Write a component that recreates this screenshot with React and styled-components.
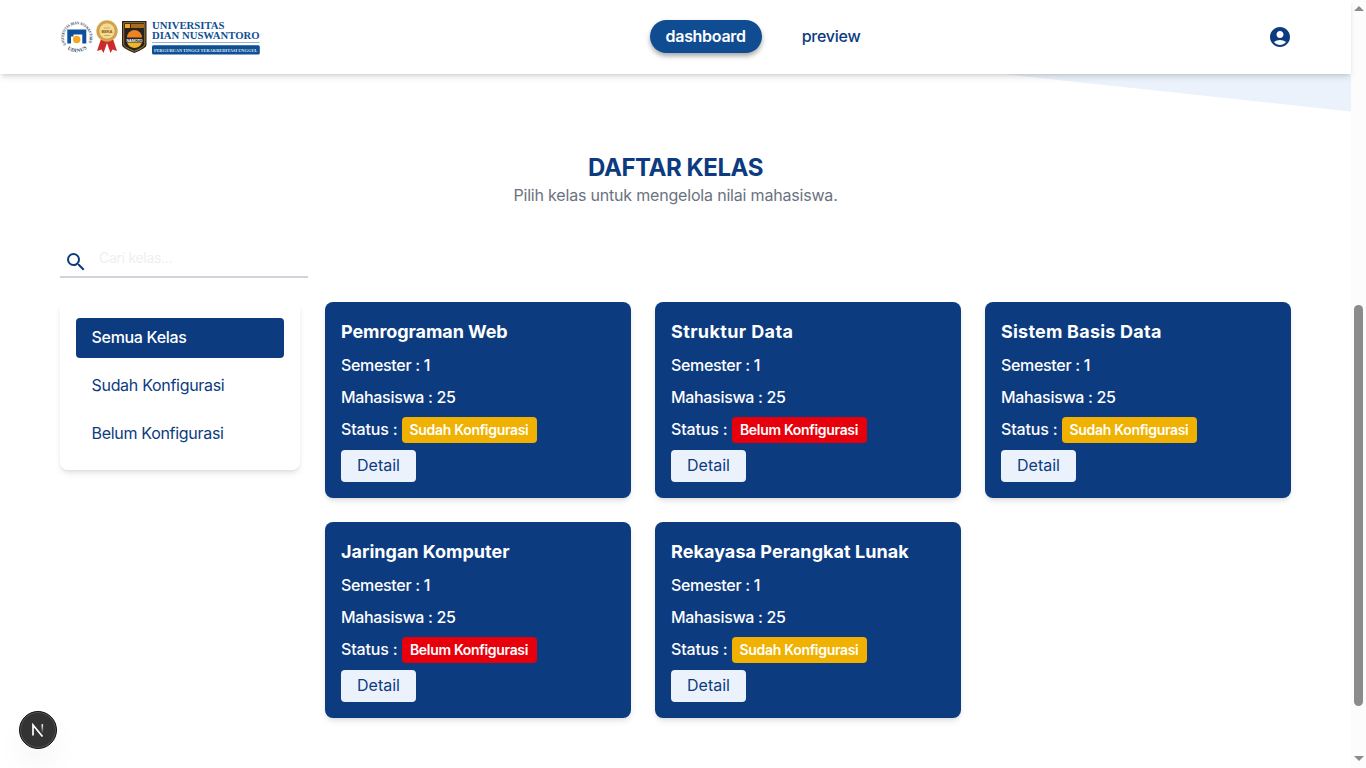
import React from "react";
import styled, { createGlobalStyle } from "styled-components";
import { MdAccountCircle, MdSearch } from "react-icons/md";

const navy = "#0c3b80";

const GlobalStyle = createGlobalStyle`
  *, *::before, *::after { box-sizing: border-box; }
  body { margin: 0; background: #fff; overflow: hidden; }
  body, button, input { font-family: Inter, "Liberation Sans", sans-serif; }
  h1, h2, p, ul { margin: 0; padding: 0; }
`;

const Window = styled.div`
  display: flex;
  height: 768px;
  width: 1366px;
`;

const Page = styled.div`
  position: relative;
  flex: 1;
  display: flex;
  flex-direction: column;
`;

const Header = styled.header`
  position: relative;
  z-index: 2;
  height: 74px;
  padding: 0 59px 0 60px;
  display: flex;
  align-items: center;
  justify-content: space-between;
  background: #fff;
  box-shadow: 0 4px 6px -1px rgba(0, 0, 0, 0.12), 0 2px 4px -2px rgba(0, 0, 0, 0.12);
`;

const LogoArt = styled.svg`
  display: block;
  width: 200px;
  height: 36px;
  overflow: visible;
`;

const Nav = styled.nav`
  display: flex;
  gap: 24px;
  margin: 0 2px 1px 0;
`;

const NavLink = styled.a`
  height: 33px;
  padding: 0 16px 2px;
  display: flex;
  align-items: center;
  border-radius: 17px;
  font-size: 16px;
  font-weight: ${(p) => (p.$active ? 600 : 500)};
  letter-spacing: ${(p) => (p.$active ? "-0.3px" : "-0.25px")};
  color: ${(p) => (p.$active ? "#fff" : navy)};
  background: ${(p) => (p.$active ? "#0f4c92" : "transparent")};
  box-shadow: ${(p) => (p.$active ? "0 3px 5px rgba(0, 0, 0, 0.35)" : "none")};
`;

const Slope = styled.svg`
  position: absolute;
  top: 74px;
  right: 0;
  width: 348px;
  height: 38px;
`;

const Main = styled.main`
  padding: 78px 60px 0;
`;

const Heading = styled.h1`
  text-align: center;
  font-size: 24px;
  line-height: 32px;
  font-weight: 700;
  letter-spacing: -0.45px;
  color: ${navy};
`;

const Lead = styled.p`
  height: 24px;
  text-align: center;
  font-size: 16px;
  line-height: 23px;
  letter-spacing: -0.19px;
  color: #6b7280;
`;

const SearchBar = styled.label`
  margin-top: 32px;
  width: 248px;
  height: 38px;
  padding-left: 4px;
  display: flex;
  align-items: center;
  gap: 11px;
  border-bottom: 2px solid #d1d5db;
  color: ${navy};
  svg { margin-top: 7px; }
`;

const SearchInput = styled.input`
  flex: 1;
  min-width: 0;
  border: 0;
  outline: 0;
  padding: 0;
  background: none;
  font-size: 14px;
  line-height: 20px;
  letter-spacing: -0.3px;
  &::placeholder { color: #efefef; opacity: 1; }
`;

const Columns = styled.div`
  margin-top: 24px;
  display: flex;
  align-items: flex-start;
  gap: 25px;
`;

const Filters = styled.aside`
  width: 240px;
  padding: 16px;
  display: flex;
  flex-direction: column;
  gap: 8px;
  border-radius: 8px;
  background: #fff;
  box-shadow: 0 4px 6px -1px rgba(0, 0, 0, 0.1), 0 2px 4px -2px rgba(0, 0, 0, 0.1);
`;

const FilterItem = styled.a`
  height: 40px;
  padding: 8px 15.5px;
  border-radius: 4px;
  font-size: 16px;
  line-height: 23px;
  letter-spacing: -0.3px;
  font-weight: ${(p) => (p.$active ? 500 : 400)};
  color: ${(p) => (p.$active ? "#fff" : navy)};
  background: ${(p) => (p.$active ? navy : "transparent")};
`;

const CardGrid = styled.section`
  display: grid;
  grid-template-columns: repeat(3, 306px);
  gap: 24px;
`;

const Card = styled.article`
  height: 196px;
  padding: 16px;
  display: flex;
  flex-direction: column;
  align-items: flex-start;
  gap: 8px;
  border-radius: 8px;
  background: ${navy};
  color: #fff;
  box-shadow: 0 4px 6px -1px rgba(0, 0, 0, 0.1), 0 2px 4px -2px rgba(0, 0, 0, 0.1);
`;

const CardTitle = styled.h2`
  font-size: 18px;
  line-height: 28px;
  font-weight: 700;
  letter-spacing: ${(p) => p.$tracking}px;
`;

const Field = styled.p`
  height: 24px;
  display: flex;
  align-items: center;
  font-size: 16px;
  line-height: 23px;
  padding-bottom: 1px;
  font-weight: 500;
  letter-spacing: -0.32px;
  white-space: nowrap;
`;

const StatusLabel = styled.span`
  width: 61px;
  letter-spacing: -0.15px;
`;

const Badge = styled.span`
  width: 135px;
  height: 26px;
  margin-bottom: -1px;
  padding: 0 1px 1px 0;
  display: flex;
  align-items: center;
  justify-content: center;
  border-radius: 4px;
  font-size: 14px;
  font-weight: 600;
  letter-spacing: -0.32px;
  background: ${(p) => (p.$done ? "#f0b100" : "#e7000b")};
`;

const DetailButton = styled.button`
  width: 75px;
  height: 32px;
  border: 0;
  border-radius: 4px;
  padding: 0 0 2px;
  font-size: 16px;
  color: ${navy};
  background: #ebf2fc;
`;

const Scrollbar = styled.div`
  width: 15px;
  padding: 6px 0 7px;
  display: flex;
  flex-direction: column;
  align-items: center;
  background: #fcfcfc;
`;

const Arrow = styled.i`
  border: solid transparent;
  border-width: ${(p) => (p.$up ? "0 5px 5px" : "5px 5px 0")};
  border-${(p) => (p.$up ? "bottom" : "top")}-color: #8b8b8b;
`;

const Thumb = styled.div`
  margin: 294px 0 auto;
  width: 9px;
  height: 401px;
  border-radius: 5px;
  background: #8b8b8b;
`;

const DevBadge = styled.div`
  position: absolute;
  left: 19px;
  bottom: 19px;
  width: 38px;
  height: 38px;
  display: flex;
  align-items: center;
  justify-content: center;
  border-radius: 50%;
  background: #333;
  border: 1px solid #111;
  box-shadow: inset 0 0 0 1px #555, 0 16px 32px -8px rgba(0, 0, 0, 0.12);
`;

function Logo() {
  return (
    <LogoArt viewBox="60 19 200 36" role="img" aria-label="Universitas Dian Nuswantoro">
      <defs>
        <path id="ringTop" d="M66.2 44.4A12.800 12.800 0 1 1 87.400 44.400" />
        <path id="ringBottom" d="M64.500 46A15.200 15.200 0 0 0 89 46" />
      </defs>
      <g fontFamily="Liberation Serif, serif" fontWeight="700" fill="#2a3d57">
        <text fontSize="4.2"><textPath href="#ringTop" textLength="53" lengthAdjust="spacingAndGlyphs">UNIVERSITAS DIAN NUSWANTORO</textPath></text>
        <text fontSize="5"><textPath href="#ringBottom" startOffset="4" textLength="21">UDINUS</textPath></text>
      </g>
      <path d="M67.300 29.500H86.300V43.500H82.300V34.500H73.500V36.500H71V43.500H67.300Z" fill="#0f4f9a" />
      <circle cx="76.700" cy="39.500" r="3.700" fill="#f5a81c" />
      <path d="M101 39L97 51L101.500 49.500L103.500 53L107 43L110.500 53L112.500 49.500L117 51L113 39Z" fill="#cf2a2a" />
      <circle cx="107" cy="31" r="10.700" fill="#d3a552" />
      <circle cx="107" cy="31" r="8.200" fill="#f3d991" stroke="#c28d35" strokeWidth=".7" />
      <text x="101.500" y="32.800" fontSize="4.200" fontWeight="700" fontFamily="Liberation Sans, sans-serif" fill="#8a5a16" textLength="11">BEKA</text>
      <path d="M104 28H110M104 35.500H110" stroke="#c9a057" strokeWidth=".8" />
      <path d="M122 21H146.500V45Q146.500 48 134.300 53Q122 48 122 45Z" fill="#252321" />
      <path d="M123.700 22.700H144.800V44.500Q144.800 47 134.300 51.300Q123.700 47 123.700 44.500Z" fill="none" stroke="#c98c23" strokeWidth=".8" />
      <path d="M125 24H130V28H125Z" fill="#f0a52a" />
      <path d="M131 24H144V28H131Z" fill="#a96b1b" />
      <path d="M127 37.500A7.500 7.500 0 0 1 142 37.500Z" fill="#ef8322" />
      <path d="M127 42.500H142Q140 47.500 134.500 48Q129 47.500 127 42.500Z" fill="#f0b62c" />
      <text x="126.500" y="41.500" fontSize="3.800" fontWeight="700" fontFamily="Liberation Sans, sans-serif" fill="#fff" textLength="16">NAMOTO</text>
      <g fontFamily="Liberation Serif, serif" fontWeight="700" fill="#0f4f93">
        <text x="152" y="28.500" fontSize="11" textLength="72.500" lengthAdjust="spacingAndGlyphs">UNIVERSITAS</text>
        <text x="152" y="39" fontSize="11" textLength="107.500" lengthAdjust="spacingAndGlyphs">DIAN NUSWANTORO</text>
      </g>
      <path d="M152 42.500H259.500" stroke="#7fa3cc" strokeWidth=".8" />
      <rect x="152" y="45.300" width="107.800" height="9.200" rx="1.500" fill="#0f4f93" />
      <text x="154" y="51.600" fontSize="4.800" fontWeight="700" fontFamily="Liberation Serif, serif" fill="#dce9f7" textLength="103.500" lengthAdjust="spacingAndGlyphs">PERGURUAN TINGGI TERAKREDITASI UNGGUL</text>
    </LogoArt>
  );
}

const filters = ["Semua Kelas", "Sudah Konfigurasi", "Belum Konfigurasi"];

const classes = [
  { name: "Pemrograman Web", done: true, tracking: -0.07 },
  { name: "Struktur Data", done: false, tracking: 0.38 },
  { name: "Sistem Basis Data", done: true, tracking: 0.22 },
  { name: "Jaringan Komputer", done: false, tracking: 0 },
  { name: "Rekayasa Perangkat Lunak", done: true, tracking: 0.06 },
];

export default function App() {
  return (
    <Window>
      <GlobalStyle />
      <Page>
        <Header>
          <Logo />
          <Nav>
            <NavLink $active>dashboard</NavLink>
            <NavLink>preview</NavLink>
          </Nav>
          <MdAccountCircle size={24} color={navy} />
        </Header>
        <Slope viewBox="0 0 348 38"><path d="M0 0H348V37.500Z" fill="#ebf2fb" /></Slope>
        <Main>
          <Heading>DAFTAR KELAS</Heading>
          <Lead>Pilih kelas untuk mengelola nilai mahasiswa.</Lead>
          <SearchBar>
            <MdSearch size={24} />
            <SearchInput placeholder="Cari kelas..." />
          </SearchBar>
          <Columns>
            <Filters>
              {filters.map((label, i) => (
                <FilterItem key={label} $active={i === 0}>{label}</FilterItem>
              ))}
            </Filters>
            <CardGrid>
              {classes.map((c) => (
                <Card key={c.name}>
                  <CardTitle $tracking={c.tracking}>{c.name}</CardTitle>
                  <Field>Semester : 1</Field>
                  <Field>Mahasiswa : 25</Field>
                  <Field>
                    <StatusLabel>Status :</StatusLabel>
                    <Badge $done={c.done}>{c.done ? "Sudah" : "Belum"} Konfigurasi</Badge>
                  </Field>
                  <DetailButton>Detail</DetailButton>
                </Card>
              ))}
            </CardGrid>
          </Columns>
        </Main>
        <DevBadge>
          <svg width="14" height="14" viewBox="0 0 14 14" fill="none">
            <defs>
              <linearGradient id="fade" x1="0" y1="0" x2="0" y2="1">
                <stop offset="0" stopColor="#fff" />
                <stop offset="1" stopColor="#fff" stopOpacity="0" />
              </linearGradient>
            </defs>
            <path d="M2 12.500V2L11.500 13.500" stroke="#fff" strokeWidth="1.700" />
            <rect x="10.500" y="1.200" width="1.600" height="9" fill="url(#fade)" />
          </svg>
        </DevBadge>
      </Page>
      <Scrollbar>
        <Arrow $up />
        <Thumb />
        <Arrow />
      </Scrollbar>
    </Window>
  );
}
